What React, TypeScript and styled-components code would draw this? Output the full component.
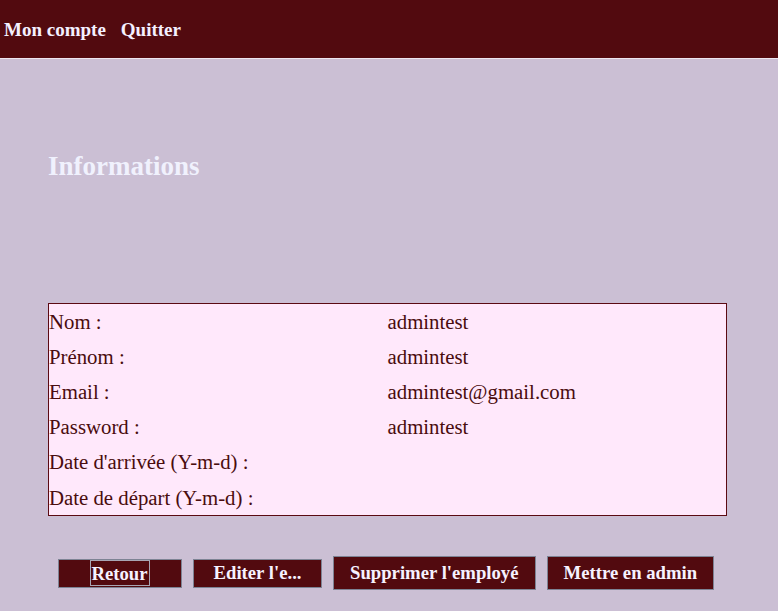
import React from 'react';
import styled, { createGlobalStyle } from 'styled-components';

const Global = createGlobalStyle`
    html, body {
    margin: 0;
    padding: 0;
    background: #cbbfd4;
    font-family: "Liberation Serif", "Times New Roman", serif;
    }
`;

const S = {
    Page: styled.div`
    min-height: 611px;
    background: #cbbfd4;
    `,
    Header: styled.nav`
    box-sizing: border-box;
    display: flex;
    align-items: center;
    gap: 15px;
    height: 59px;
    padding: 2px 0 0 4px;
    background: #520a0f;
    border-bottom: 1px solid #efe6f0;
    `,
    NavLink: styled.a`
    color: #f4f0ff;
    font-weight: bold;
    font-size: 19px;
    line-height: 22px;
    text-decoration: none;
    `,
    Main: styled.main`
    padding: 0 51px 0 48px;
    `,
    Title: styled.h2`
    margin: 92px 0 0;
    font-size: 27px;
    line-height: 31px;
    font-weight: bold;
    color: #f0f1fd;
    `,
    Table: styled.table`
    width: 100%;
    margin-top: 121px;
    border: 1px solid #5b0a12;
    border-collapse: collapse;
    background: #ffe8fb;
    table-layout: fixed;
    `,
    Cell: styled.td`
    width: 50%;
    height: 35.2px;
    padding: 0;
    font-size: 20.8px;
    line-height: 22px;
    color: #4a0c0e;
    vertical-align: middle;
    `,
    Actions: styled.div`
    display: flex;
    align-items: center;
    gap: 11px;
    margin-top: 40px;
    padding-left: 58px;
    `,
    Button: styled.button<{ $w?: number; $h: number }>`
    box-sizing: border-box;
    display: flex;
    align-items: center;
    justify-content: center;
    width: ${p => (p.$w ? `${p.$w}px` : 'auto')};
    height: ${p => p.$h}px;
    padding: 0 ${p => (p.$w ? 10 : 16)}px;
    background: #520a0f;
    border: 1px solid #7d8394;
    border-radius: 0;
    color: #f6f2ff;
    font-family: "Liberation Serif", "Times New Roman", serif;
    font-weight: bold;
    font-size: 18.72px;
    line-height: 22px;
    white-space: nowrap;
    cursor: pointer;
    `,
    Focused: styled.span`
    display: block;
    padding: 2px 1px 1px 0;
    border: 1px solid #a9a6b4;
    line-height: 21px;
    `
};

const rows = [
    { label: 'Nom :', value: 'admintest' },
    { label: 'Prénom :', value: 'admintest' },
    { label: 'Email :', value: 'admintest@gmail.com' },
    { label: 'Password :', value: 'admintest' },
    { label: "Date d'arrivée (Y-m-d) :", value: '' },
    { label: 'Date de départ (Y-m-d) :', value: '' }
];

const App = () => {
    return <S.Page>
        <Global />
        <S.Header>
            <S.NavLink href="#">Mon compte</S.NavLink>
            <S.NavLink href="#">Quitter</S.NavLink>
        </S.Header>
        <S.Main>
            <S.Title>Informations</S.Title>
            <S.Table>
                <tbody>
                    {rows.map(r => <tr key={r.label}>
                        <S.Cell>{r.label}</S.Cell>
                        <S.Cell>{r.value}</S.Cell>
                    </tr>)}
                </tbody>
            </S.Table>
        </S.Main>
        <S.Actions>
            <S.Button $w={124} $h={29}><S.Focused>Retour</S.Focused></S.Button>
            <S.Button $w={129} $h={29} title="Editer l'employé">Editer l'e...</S.Button>
            <S.Button $h={34}>Supprimer l'employé</S.Button>
            <S.Button $h={34}>Mettre en admin</S.Button>
        </S.Actions>
    </S.Page>
}

export default App;
